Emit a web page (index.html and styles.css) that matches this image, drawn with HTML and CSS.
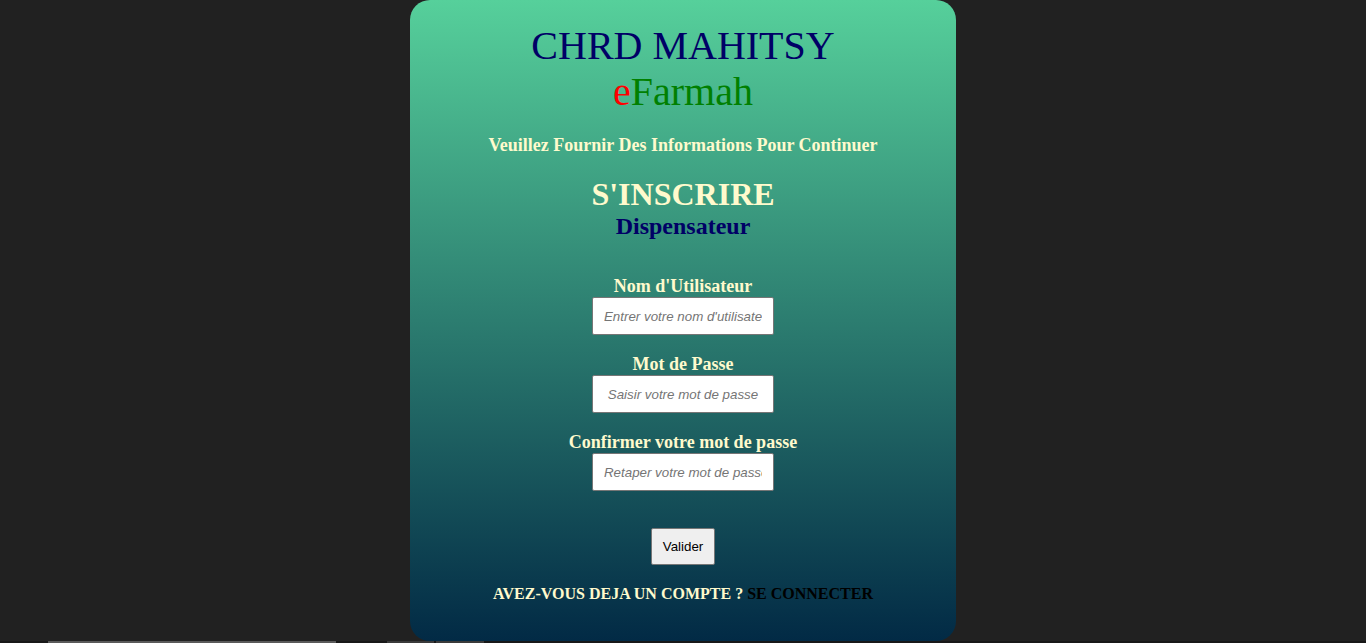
FILE: index.html
```html
<!DOCTYPE html>
<html lang="fr">
<head>
<meta charset="utf-8">
<title>CHRD MAHITSY - eFarmah</title>
<link rel="stylesheet" href="styles.css">
</head>
<body>
<main class="card">
  <h1 class="title">CHRD MAHITSY</h1>
  <div class="brand"><span class="brand-e">e</span>Farmah</div>
  <p class="subtitle">Veuillez Fournir Des Informations Pour Continuer</p>
  <h2 class="heading">S'INSCRIRE</h2>
  <h3 class="role">Dispensateur</h3>
  <form class="form">
    <label class="field">
      <span class="label">Nom d'Utilisateur</span>
      <input class="input" type="text" placeholder="Entrer votre nom d'utilisateur">
    </label>
    <label class="field">
      <span class="label">Mot de Passe</span>
      <input class="input" type="password" placeholder="Saisir votre mot de passe">
    </label>
    <label class="field">
      <span class="label">Confirmer votre mot de passe</span>
      <input class="input" type="password" placeholder="Retaper votre mot de passe">
    </label>
    <button class="submit" type="button">Valider</button>
  </form>
  <p class="footer">AVEZ-VOUS DEJA UN COMPTE ? <a class="link" href="#">SE CONNECTER</a></p>
</main>
<div class="bottom-bar">
  <span class="seg seg-1"></span>
  <span class="seg seg-2"></span>
  <span class="seg seg-3"></span>
</div>
</body>
</html>
```

FILE: styles.css
```css
html, body {
  margin: 0;
  padding: 0;
}
body {
  background: #212121;
  height: 643px;
  overflow: hidden;
  font-family: "Liberation Serif", "Times New Roman", serif;
}
.card {
  width: 546px;
  height: 641px;
  box-sizing: border-box;
  margin: 0 auto;
  padding-top: 23px;
  border-radius: 20px;
  background: linear-gradient(to bottom, #56d09b 0%, #022a45 100%);
  display: flex;
  flex-direction: column;
  align-items: center;
}
.title {
  margin: 0;
  font-size: 40px;
  line-height: 46px;
  font-weight: normal;
  color: #000066;
}
.brand {
  font-size: 40px;
  line-height: 46px;
  color: #008000;
}
.brand-e {
  color: #ff0000;
}
.subtitle {
  margin: 20px 0 0;
  font-size: 18px;
  line-height: 21px;
  font-weight: bold;
  color: #fffacd;
}
.heading {
  margin: 20px 0 0;
  font-size: 32px;
  line-height: 36px;
  font-weight: bold;
  color: #fffacd;
}
.role {
  margin: 1px 0 0;
  font-size: 24px;
  line-height: 26px;
  font-weight: bold;
  color: #000066;
}
.form {
  margin-top: 36px;
  display: flex;
  flex-direction: column;
  align-items: center;
}
.field {
  display: flex;
  flex-direction: column;
  align-items: center;
  margin-bottom: 18px;
}
.label {
  font-size: 18px;
  line-height: 22px;
  font-weight: bold;
  color: #fffacd;
}
.input {
  width: 182px;
  height: 38px;
  box-sizing: border-box;
  padding: 10px 11px;
  border: 1px solid #767676;
  border-radius: 2px;
  background: #fff;
  font-family: "Liberation Sans", Arial, sans-serif;
  font-size: 13.333px;
  text-align: center;
  outline: none;
}
.input::placeholder {
  color: #757575;
  font-style: italic;
}
.submit {
  margin-top: 19px;
  height: 37px;
  padding: 0 11px;
  border: 1px solid #767676;
  border-radius: 2px;
  background: #efefef;
  color: #000;
  font-family: "Liberation Sans", Arial, sans-serif;
  font-size: 13.333px;
}
.footer {
  margin: 20px 0 0;
  font-size: 16px;
  line-height: 18px;
  font-weight: bold;
  color: #fffacd;
}
.link {
  color: #000;
  text-decoration: none;
}
.bottom-bar {
  height: 2px;
  background: #181818;
  display: flex;
}
.seg {
  height: 2px;
  background: #5a5a5a;
}
.seg-1 { margin-left: 48px; width: 288px; }
.seg-2 { margin-left: 51px; width: 47px; background: #3a3a3a; }
.seg-3 { margin-left: 2px; width: 48px; background: #3a3a3a; }
```
